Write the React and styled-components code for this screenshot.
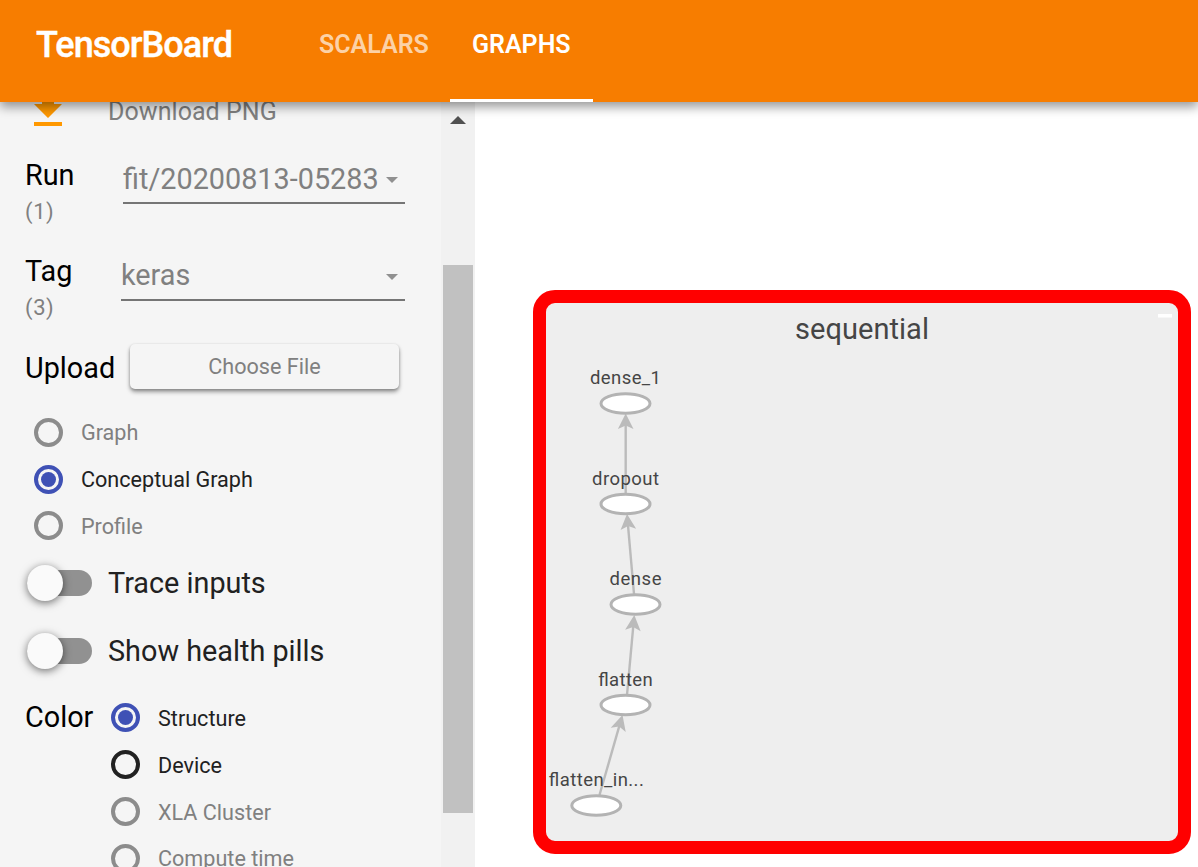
import React from "react";
import styled, { createGlobalStyle } from "styled-components";

const GlobalStyle = createGlobalStyle`
  *, *::before, *::after { box-sizing: border-box; }
  html, body { margin: 0; height: 100%; overflow: hidden; }
  body {
    font-family: Roboto, "Liberation Sans", sans-serif;
    background: #fff;
    color: #212121;
  }
  #root { height: 100%; }
`;

const Page = styled.div`
  display: flex;
  flex-direction: column;
  width: 1198px;
  height: 867px;
  overflow: hidden;
`;

const Header = styled.header`
  position: relative;
  z-index: 2;
  flex: none;
  display: flex;
  height: 102px;
  background: #f77d00;
  color: #fff;
  box-shadow: 0 5px 10px 0 rgba(0, 0, 0, 0.4);
`;

const Brand = styled.h1`
  margin: 0;
  width: 297px;
  padding-left: 36px;
  font-size: 36px;
  font-weight: 500;
  line-height: 90px;
  letter-spacing: -0.95px;
  -webkit-text-stroke: 0.4px currentColor;
`;

const Tab = styled.div`
  width: ${(p) => p.$width}px;
  padding-left: 22px;
  font-size: 25px;
  font-weight: 600;
  line-height: 90px;
  white-space: nowrap;
  color: ${(p) => (p.$active ? "#fff" : "rgba(255, 255, 255, 0.66)")};
  border-bottom: 3px solid ${(p) => (p.$active ? "#fff" : "transparent")};
`;

const Main = styled.main`
  flex: 1;
  min-height: 0;
  display: flex;
`;

const Sidebar = styled.aside`
  flex: none;
  width: 441px;
  overflow: hidden;
  background: #f5f5f5;
`;

const ScrollTrack = styled.div`
  flex: none;
  display: flex;
  flex-direction: column;
  align-items: center;
  width: 34px;
  padding-top: 14px;
  background: #f1f1f1;
`;

const ScrollArrow = styled.svg`
  display: block;
  width: 16px;
  height: 8px;
  fill: #505050;
`;

const ScrollThumb = styled.div`
  width: 30px;
  height: 548px;
  margin-top: 141px;
  background: #c1c1c1;
`;

const DownloadRow = styled.div`
  display: flex;
  align-items: center;
  height: 48px;
  margin-top: -16px;
  padding-left: 24px;
`;

const DownloadIcon = styled.svg`
  width: 48px;
  height: 48px;
  margin-right: 36px;
  fill: #ff9800;
`;

const DownloadText = styled.span`
  padding-top: 3px;
  font-size: 25px;
  letter-spacing: 0.06px;
  color: #808080;
`;

const FieldRow = styled.div`
  display: flex;
  height: 96px;
  padding-left: 25px;
`;

const FieldName = styled.div`
  width: ${(p) => p.$width}px;
  padding-top: 23px;
`;

const Label = styled.div`
  font-size: 28.8px;
  line-height: 36px;
  color: #000;
`;

const Count = styled.div`
  padding-top: 1px;
  font-size: 22px;
  line-height: 36px;
  letter-spacing: 0.6px;
  color: #808080;
`;

const Select = styled.div`
  display: flex;
  align-items: center;
  justify-content: space-between;
  width: ${(p) => p.$width}px;
  height: ${(p) => p.$height}px;
  margin-top: 21px;
  padding-right: 7px;
  border-bottom: 2px solid #757575;
  font-size: 28.8px;
  color: #808080;
`;

const Caret = styled.svg`
  width: 12px;
  height: 6px;
  margin-top: 3px;
  fill: #909090;
`;

const UploadRow = styled.div`
  display: flex;
  align-items: center;
  height: 81px;
  padding-left: 25px;
`;

const UploadName = styled(Label)`
  width: 105px;
  padding-top: 2px;
`;

const FileButton = styled.button`
  width: 269px;
  height: 45px;
  padding: 0;
  border: 0;
  border-radius: 5px;
  background: #f5f5f5;
  box-shadow: 0 3px 4px rgba(0, 0, 0, 0.36), 0 1px 3px rgba(0, 0, 0, 0.2);
  font: 400 21.6px Roboto, "Liberation Sans", sans-serif;
  color: #808080;
`;

const RadioGroup = styled.div`
  padding-left: ${(p) => p.$inset || 0}px;
  padding-top: ${(p) => p.$lead || 0}px;
`;

const RadioRow = styled.div`
  display: flex;
  align-items: center;
  gap: 18px;
  height: 46.8px;
  font-size: 21.6px;
  color: ${(p) => (p.$muted ? "#808080" : "#212121")};
`;

const RadioMark = styled.span`
  flex: none;
  display: grid;
  place-items: center;
  width: 29px;
  height: 29px;
  border: 4px solid currentColor;
  border-radius: 50%;
  color: ${(p) => (p.$checked ? "#3f51b5" : p.$muted ? "#8c8c8c" : "#212121")};

  &::after {
    content: "";
    width: 15px;
    height: 15px;
    border-radius: 50%;
    background: ${(p) => (p.$checked ? "currentColor" : "transparent")};
  }
`;

const RadioText = styled.span`
  padding-top: 1px;
`;

const ToggleRow = styled.div`
  display: flex;
  align-items: center;
  height: 68px;
  padding-left: 27px;
  font-size: 28.8px;
`;

const ToggleTrack = styled.span`
  display: flex;
  align-items: center;
  width: 65px;
  height: 26px;
  margin-right: 16px;
  border-radius: 13px;
  background: #919191;
`;

const ToggleThumb = styled.span`
  width: 36px;
  height: 36px;
  flex: none;
  border-radius: 50%;
  background: #fafafa;
  box-shadow: 0 2px 8px rgba(0, 0, 0, 0.55);
`;

const ColorRow = styled.div`
  display: flex;
  margin-top: 9.2px;
  padding-left: 25px;
`;

const ColorName = styled(Label)`
  width: 86px;
  padding-top: 4.8px;
`;

const Canvas = styled.section`
  flex: 1;
  padding: 188px 0 0 58px;
  background: #fff;
`;

const Group = styled.div`
  width: 658px;
  height: 564px;
  border: 13px solid #ff0000;
  border-radius: 22px;
  background: #eee;
`;

const Drawing = styled.svg`
  display: block;
  width: 632px;
  height: 538px;

  text {
    font-family: Roboto, "Liberation Sans", sans-serif;
    fill: #454545;
    text-anchor: middle;
  }
`;

const NODES = [
  { name: "dense_1", x: 625.5, y: 403.5, w: 71 },
  { name: "dropout", x: 625.5, y: 504, w: 67 },
  { name: "dense", x: 635.5, y: 604.5, w: 52 },
  { name: "flatten", x: 625.5, y: 705, w: 54.5 },
  { name: "flatten_in...", x: 596.3, y: 805.5, w: 95 },
];

const EDGES = [
  { from: [625.7, 494], to: [625.7, 413.5] },
  { from: [634, 594], to: [627, 514] },
  { from: [627, 695], to: [634.3, 615] },
  { from: [599.5, 795], to: [622.5, 715] },
];

function Radio({ checked, muted, children }) {
  return (
    <RadioRow $muted={muted}>
      <RadioMark $checked={checked} $muted={muted} />
      <RadioText>{children}</RadioText>
    </RadioRow>
  );
}

function Toggle({ children }) {
  return (
    <ToggleRow>
      <ToggleTrack>
        <ToggleThumb />
      </ToggleTrack>
      <span>{children}</span>
    </ToggleRow>
  );
}

function Field({ name, count, value, nameWidth, width, height }) {
  return (
    <FieldRow>
      <FieldName $width={nameWidth}>
        <Label>{name}</Label>
        <Count>({count})</Count>
      </FieldName>
      <Select $width={width} $height={height}>
        <span>{value}</span>
        <Caret viewBox="0 0 12 6">
          <path d="M0 0h12L6 6z" />
        </Caret>
      </Select>
    </FieldRow>
  );
}

function Edge({ from, to }) {
  const dx = to[0] - from[0];
  const dy = to[1] - from[1];
  const length = Math.hypot(dx, dy);
  const angle = (Math.atan2(dy, dx) * 180) / Math.PI;
  return (
    <g>
      <path
        d={`M${from[0]} ${from[1]}L${to[0] - (dx / length) * 8} ${to[1] - (dy / length) * 8}`}
        stroke="#bbb"
        strokeWidth="2.4"
        fill="none"
      />
      <path
        d="M0 0L-15.5 7.8L-12 0L-15.5 -7.8Z"
        fill="#bbb"
        transform={`translate(${to[0]} ${to[1]}) rotate(${angle})`}
      />
    </g>
  );
}

function Graph() {
  return (
    <Drawing viewBox="546 303 632 538">
      <text x="862" y="339" fontSize="29" textLength="134">
        sequential
      </text>
      <rect x="1158" y="314" width="14" height="3.5" fill="#fff" />
      {EDGES.map((e, i) => (
        <Edge key={i} {...e} />
      ))}
      {NODES.map((n) => (
        <g key={n.name}>
          <ellipse cx={n.x} cy={n.y} rx="24.5" ry="9.7" fill="#fff" stroke="#b3b3b3" strokeWidth="3" />
          <text x={n.x} y={n.y - 19.5} fontSize="18.5" textLength={n.w}>
            {n.name}
          </text>
        </g>
      ))}
    </Drawing>
  );
}

export default function App() {
  return (
    <Page>
      <GlobalStyle />
      <Header>
        <Brand>TensorBoard</Brand>
        <Tab $width={153}>SCALARS</Tab>
        <Tab $width={143} $active>
          GRAPHS
        </Tab>
      </Header>
      <Main>
        <Sidebar>
          <DownloadRow>
            <DownloadIcon viewBox="0 0 24 24">
              <path d="M19 9h-4V3H9v6H5l7 7 7-7zM5 18v2h14v-2H5z" />
            </DownloadIcon>
            <DownloadText>Download PNG</DownloadText>
          </DownloadRow>
          <Field name="Run" count={1} value="fit/20200813-05283" nameWidth={98} width={282} height={49} />
          <Field name="Tag" count={3} value="keras" nameWidth={96} width={284} height={50} />
          <UploadRow>
            <UploadName>Upload</UploadName>
            <FileButton>Choose File</FileButton>
          </UploadRow>
          <RadioGroup $inset={34} $lead={2}>
            <Radio muted>Graph</Radio>
            <Radio checked>Conceptual Graph</Radio>
            <Radio muted>Profile</Radio>
          </RadioGroup>
          <Toggle>Trace inputs</Toggle>
          <Toggle>Show health pills</Toggle>
          <ColorRow>
            <ColorName>Color</ColorName>
            <RadioGroup>
              <Radio checked>Structure</Radio>
              <Radio>Device</Radio>
              <Radio muted>XLA Cluster</Radio>
              <Radio muted>Compute time</Radio>
            </RadioGroup>
          </ColorRow>
        </Sidebar>
        <ScrollTrack>
          <ScrollArrow viewBox="0 0 16 8">
            <path d="M8 0l8 8H0z" />
          </ScrollArrow>
          <ScrollThumb />
        </ScrollTrack>
        <Canvas>
          <Group>
            <Graph />
          </Group>
        </Canvas>
      </Main>
    </Page>
  );
}
